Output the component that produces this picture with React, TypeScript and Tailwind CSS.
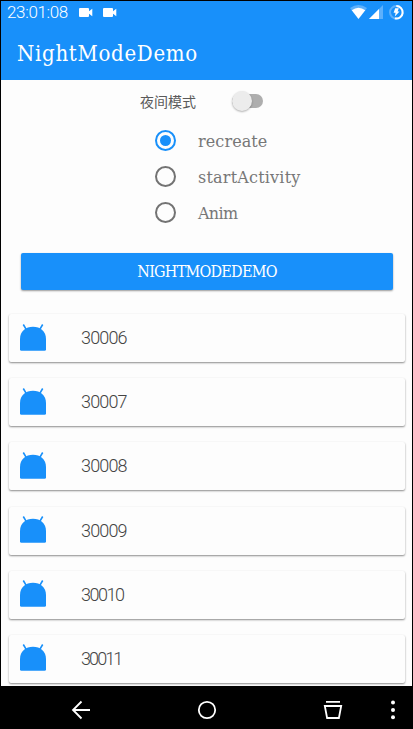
import clsx from 'clsx'

const modes = [
  { label: 'recreate', tracking: 'tracking-[0.1px]' },
  { label: 'startActivity', tracking: 'tracking-[0.2px]' },
  { label: 'Anim', tracking: 'tracking-[-0.7px]' },
]

const items = [
  { label: '30006', tracking: 'tracking-[-0.85px]' },
  { label: '30007', tracking: 'tracking-[-0.85px]' },
  { label: '30008', tracking: 'tracking-[-0.85px]' },
  { label: '30009', tracking: 'tracking-[-0.85px]' },
  { label: '30010', tracking: 'tracking-[-1.5px]' },
  { label: '30011', tracking: 'tracking-[-1.9px]' },
]

function CameraIcon() {
  return (
    <svg width="14" height="9" viewBox="0 0 14 9" fill="white">
      <path d="M1 0h8q1 0 1 1v2.3L13.3.7v7.6L10 5.7V8q0 1-1 1H1Q0 9 0 8V1Q0 0 1 0z" />
    </svg>
  )
}

function StatusIcons() {
  return (
    <svg width="56" height="17" viewBox="0 0 56 17">
      <path d="M0 4Q8.5-2 17 4l-2.3 3H2.3z" fill="#5db0fc" />
      <path d="M1.7 6.2Q8.5 1.2 15.3 6.2L8.5 15z" fill="white" />
      <path d="M33 1v14H19z" fill="#5db0fc" />
      <path d="M29 5v10H19z" fill="white" />
      <circle cx="46.3" cy="8.3" r="6.3" fill="none" stroke="#5db0fc" strokeWidth="2" />
      <path d="M46.3 2a6.3 6.3 0 1 1-1.5 12.4" fill="none" stroke="white" strokeWidth="2" />
      <path d="M45.2 4.2h3.6L47.6 7.4h1.9L44.8 12.5l.8-3.7h-2z" fill="white" />
    </svg>
  )
}

function AndroidIcon() {
  return (
    <svg className="-mt-[2px]" width="26" height="27" viewBox="0 0 26 27" fill="#1890fa">
      <path d="M3.3.5 6.2 5.3M22.7.5l-2.9 4.8" stroke="#1890fa" strokeWidth="1.6" />
      <path d="M0 15C0 7.4 5.8 2.8 13 2.8S26 7.4 26 15v10.4q0 1.4-1.4 1.4H1.4Q0 26.8 0 25.4z" />
    </svg>
  )
}

function Radio({ label, tracking, checked }: { label: string; tracking: string; checked: boolean }) {
  return (
    <div className="flex h-[36.4px] items-center">
      <span
        className={clsx(
          'flex h-[21px] w-[21px] items-center justify-center rounded-full border-2',
          checked ? 'border-[#1890fa]' : 'border-[#737373]'
        )}
      >
        {checked && <span className="h-[11px] w-[11px] rounded-full bg-[#1890fa]" />}
      </span>
      <span className={clsx("ml-[22px] pt-[3px] font-['DejaVu_Serif'] text-[16px] leading-none text-[#777]", tracking)}>
        {label}
      </span>
    </div>
  )
}

export default function App() {
  return (
    <div className="flex h-[729px] w-[413px] flex-col overflow-hidden border border-b-0 border-black bg-[#fdfdfd]">
      <header className="h-[79px] shrink-0 bg-[#1890fa] text-white">
        <div className="flex h-[22px] items-center pl-[6px] pr-[6px]">
          <span className="w-[72px] whitespace-nowrap font-[Roboto] text-[17px] font-light leading-none tracking-[-0.35px]">23:01:08</span>
          <span className="flex gap-[10px]">
            <CameraIcon />
            <CameraIcon />
          </span>
          <span className="ml-auto">
            <StatusIcons />
          </span>
        </div>
        <h1 className="pl-4 pt-[14px] font-['DejaVu_Serif_Condensed','DejaVu_Serif'] text-[22px] leading-[34px] tracking-[0.7px] [font-stretch:condensed]">
          NightModeDemo
        </h1>
      </header>

      <main className="h-[606px] shrink-0 overflow-hidden">
        <div className="flex h-[42px] items-center pl-[139px]">
          <span className="w-[92px] font-['Noto_Sans_CJK_SC',sans-serif] text-[14px] leading-none text-[#5a5a5a]">夜间模式</span>
          <span className="relative h-[14px] w-[31px] rounded-full bg-[#aeaeae]">
            <span className="absolute -top-[3px] left-0 h-5 w-5 rounded-full bg-[#ececec] shadow-[0_1px_2px_rgba(0,0,0,0.3)]" />
          </span>
        </div>
        <div className="h-[108px] pl-[154px]">
          {modes.map((mode, i) => (
            <Radio key={mode.label} {...mode} checked={i === 0} />
          ))}
        </div>
        <button className="ml-5 mt-[23px] flex h-[37px] w-[372px] items-center justify-center rounded-[2px] bg-[#1890fa] font-['DejaVu_Serif_Condensed','DejaVu_Serif'] text-[16px] tracking-[-0.75px] text-white shadow-[0_1px_2px_rgba(0,0,0,0.4)] [font-stretch:condensed]">
          NIGHTMODEDEMO
        </button>
        <ul className="mt-6 flex flex-col gap-[16.2px] px-2">
          {items.map(({ label, tracking }) => (
            <li
              key={label}
              className="flex h-12 w-[396px] items-center rounded-[2px] bg-[#fdfdfd] pl-[11px] shadow-[0_1px_2px_rgba(0,0,0,0.45)]"
            >
              <AndroidIcon />
              <span className={clsx('ml-[35px] font-[Roboto] text-[18px] font-light leading-none text-[#444]', tracking)}>
                {label}
              </span>
            </li>
          ))}
        </ul>
      </main>

      <nav className="flex-1 bg-black">
        <svg width="411" height="43" viewBox="1 686 411 43" fill="none" stroke="white" strokeWidth="1.8">
          <path d="M90 710H73.5M81.5 701.5 73 710l8.5 8.5" />
          <circle cx="207" cy="710" r="8.2" />
          <path d="M326 701.8h14M324.8 706h16.4l-2.3 12h-11.8z" />
          <g fill="white" stroke="none">
            <circle cx="393" cy="702.5" r="2" />
            <circle cx="393" cy="710" r="2" />
            <circle cx="393" cy="717.3" r="2" />
          </g>
        </svg>
      </nav>
    </div>
  )
}
